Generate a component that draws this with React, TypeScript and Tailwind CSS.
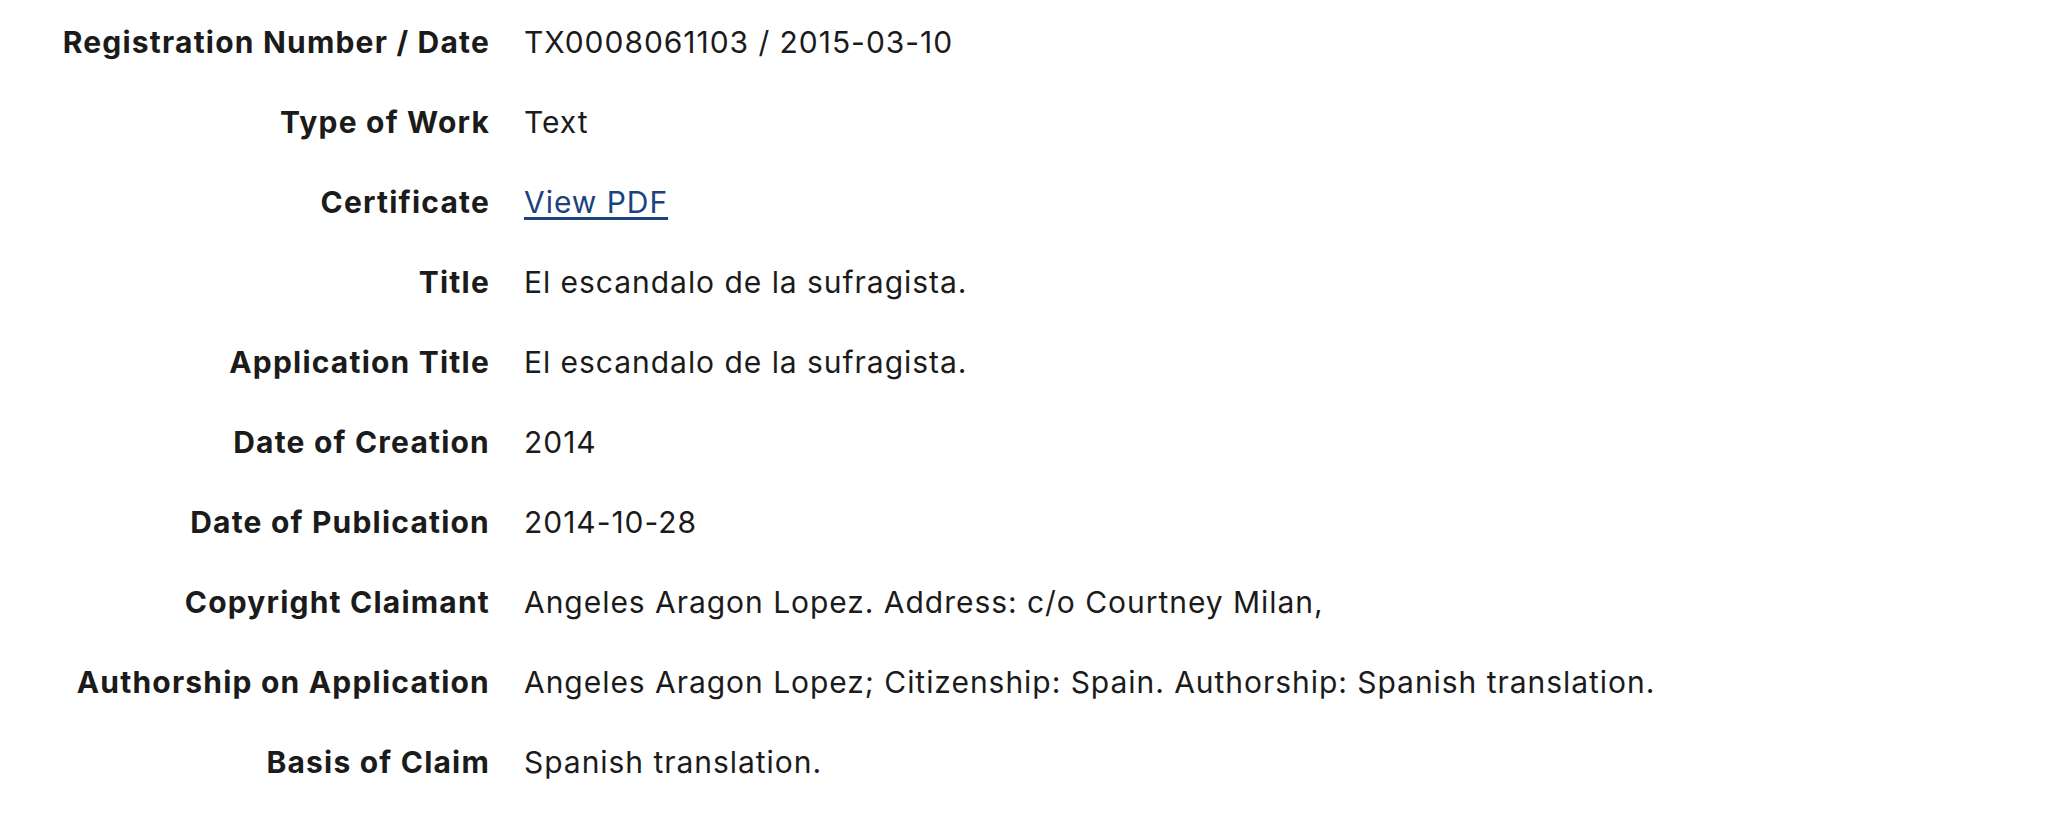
const rows: { label: string; value: string; link?: boolean }[] = [
  { label: 'Registration Number / Date', value: 'TX0008061103 / 2015-03-10' },
  { label: 'Type of Work', value: 'Text' },
  { label: 'Certificate', value: 'View PDF', link: true },
  { label: 'Title', value: 'El escandalo de la sufragista.' },
  { label: 'Application Title', value: 'El escandalo de la sufragista.' },
  { label: 'Date of Creation', value: '2014' },
  { label: 'Date of Publication', value: '2014-10-28' },
  { label: 'Copyright Claimant', value: 'Angeles Aragon Lopez. Address: c/o Courtney Milan,' },
  { label: 'Authorship on Application', value: 'Angeles Aragon Lopez; Citizenship: Spain. Authorship: Spanish translation.' },
  { label: 'Basis of Claim', value: 'Spanish translation.' },
]

export default function App() {
  return (
    <div className="min-h-[816px] w-full bg-white pt-[2px] font-['Inter','Liberation_Sans',sans-serif] text-[#1b1b1b]">
      <dl className="grid grid-cols-[490px_1fr] gap-x-[34px]">
        {rows.map((r) => (
          <div key={r.label} className="contents">
            <dt className="flex h-20 items-center justify-end text-right text-[30px] font-bold leading-10 tracking-[0.04em]">
              {r.label}
            </dt>
            <dd className="flex h-20 items-center text-[30px] leading-10 tracking-[0.032em]">
              {r.link ? (
                <a href="#" className="text-[#1a4480] underline underline-offset-4">
                  {r.value}
                </a>
              ) : (
                r.value
              )}
            </dd>
          </div>
        ))}
      </dl>
    </div>
  )
}
